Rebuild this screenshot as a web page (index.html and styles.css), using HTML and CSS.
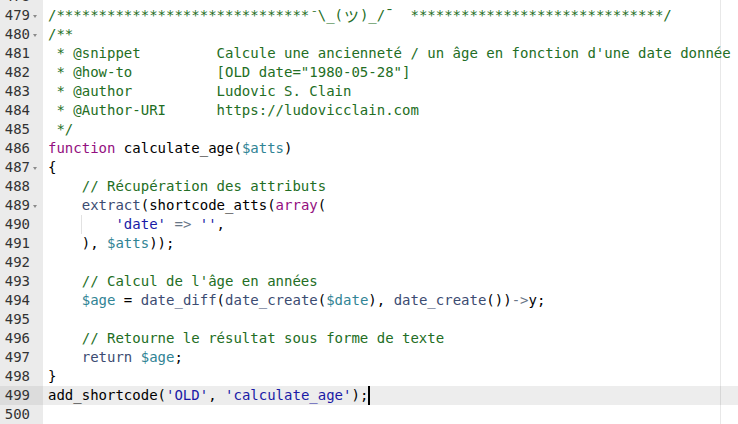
FILE: index.html
```html
<!DOCTYPE html>
<html lang="fr">
<head>
<meta charset="utf-8">
<title>Snippet</title>
<link rel="stylesheet" href="styles.css">
</head>
<body>
<div class="editor">
  <div class="gutter">
    <div class="lines">
      <div class="gl">478<span class="fw"></span></div>
      <div class="gl">479<span class="fw open"></span></div>
      <div class="gl">480<span class="fw open"></span></div>
      <div class="gl">481<span class="fw"></span></div>
      <div class="gl">482<span class="fw"></span></div>
      <div class="gl">483<span class="fw"></span></div>
      <div class="gl">484<span class="fw"></span></div>
      <div class="gl">485<span class="fw"></span></div>
      <div class="gl">486<span class="fw"></span></div>
      <div class="gl">487<span class="fw open"></span></div>
      <div class="gl">488<span class="fw"></span></div>
      <div class="gl">489<span class="fw open"></span></div>
      <div class="gl">490<span class="fw"></span></div>
      <div class="gl">491<span class="fw"></span></div>
      <div class="gl">492<span class="fw"></span></div>
      <div class="gl">493<span class="fw"></span></div>
      <div class="gl">494<span class="fw"></span></div>
      <div class="gl">495<span class="fw"></span></div>
      <div class="gl">496<span class="fw"></span></div>
      <div class="gl">497<span class="fw"></span></div>
      <div class="gl">498<span class="fw"></span></div>
      <div class="gl active">499<span class="fw"></span></div>
      <div class="gl">500<span class="fw"></span></div>
    </div>
  </div>
  <div class="content">
    <div class="print-margin"></div>
    <div class="lines">
<div class="cl"></div>
<div class="cl"><span class="cm">/******************************<span class="mac">¯</span>\_(<span class="wide">ツ</span>)_/¯  ******************************/</span></div>
<div class="cl"><span class="cm">/**</span></div>
<div class="cl"><span class="cm"> * @snippet         Calcule une ancienneté / un âge en fonction d'une date donnée</span></div>
<div class="cl"><span class="cm"> * @how-to          [OLD date="1980-05-28"]</span></div>
<div class="cl"><span class="cm"> * @author          Ludovic S. Clain</span></div>
<div class="cl"><span class="cm"> * @Author-URI      https://ludovicclain.com</span></div>
<div class="cl"><span class="cm"> */</span></div>
<div class="cl"><span class="kw">function</span> calculate_age(<span class="var">$atts</span>)</div>
<div class="cl">{</div>
<div class="cl">    <span class="cm">// Récupération des attributs</span></div>
<div class="cl">    <span class="fn">extract</span>(shortcode_atts(<span class="kw">array</span>(</div>
<div class="cl"><span class="guide">    </span>    <span class="str">'date'</span> <span class="op">=&gt;</span> <span class="str">''</span>,</div>
<div class="cl">    ), <span class="var">$atts</span>));</div>
<div class="cl"></div>
<div class="cl">    <span class="cm">// Calcul de l'âge en années</span></div>
<div class="cl">    <span class="var">$age</span> = <span class="fn">date_diff</span>(<span class="fn">date_create</span>(<span class="var">$date</span>), <span class="fn">date_create</span>())<span class="op">-&gt;</span>y;</div>
<div class="cl"></div>
<div class="cl">    <span class="cm">// Retourne le résultat sous forme de texte</span></div>
<div class="cl">    <span class="fn">return</span> <span class="var">$age</span>;</div>
<div class="cl">}</div>
<div class="cl active">add_shortcode(<span class="str">'OLD'</span>, <span class="str">'calculate_age'</span>);<span class="cursor"></span></div>
<div class="cl"></div>
    </div>
  </div>
</div>
</body>
</html>
```
FILE: styles.css
```css
html, body {
  margin: 0;
  padding: 0;
  background: #ffffff;
}

.editor {
  display: flex;
  width: 738px;
  height: 424px;
  overflow: hidden;
  font-family: "DejaVu Sans Mono", "Liberation Mono", "Noto Sans CJK JP", monospace;
  font-size: 14px;
  line-height: 19px;
  color: #000000;
}

.lines {
  margin-top: -13.5px;
}

.gutter {
  flex: 0 0 43px;
  background: #ebebeb;
  color: #333333;
}

.gl {
  height: 19px;
  display: flex;
  justify-content: flex-end;
  align-items: center;
  padding-right: 4px;
}

.gl.active {
  background: #dcdcdc;
}

.fw {
  width: 9px;
  height: 19px;
  display: flex;
  align-items: center;
  justify-content: center;
}

.fw.open::before {
  content: "";
  display: block;
  margin-top: 3px;
  margin-left: 1px;
  border-left: 2.5px solid transparent;
  border-right: 2.5px solid transparent;
  border-top: 3px solid #8a8a8a;
}

.content {
  flex: 1;
  position: relative;
  padding-left: 5px;
}

.print-margin {
  position: absolute;
  left: 677px;
  top: 0;
  bottom: 0;
  width: 1px;
  background: #e8e8e8;
}

.cl {
  position: relative;
  height: 19px;
  white-space: pre;
  margin-left: -5px;
  padding-left: 5px;
}

.cl.active {
  background: rgba(0, 0, 0, 0.07);
}

.cm { color: #236e24; }
.kw { color: #930f80; }
.var { color: #318495; }
.str { color: #1a1aa6; }
.op { color: #687687; }
.fn { color: #3c4c72; }

.mac {
  display: inline-block;
  width: 8.43px;
  text-align: right;
  font-size: 11px;
  vertical-align: top;
}

.wide {
  display: inline-block;
  width: 16.86px;
  text-align: center;
  font-family: "Noto Sans CJK JP", sans-serif;
  font-size: 15px;
  line-height: 19px;
  vertical-align: top;
}

.guide {
  display: inline-block;
  box-shadow: inset -1px 0 0 #e2e2e2;
  height: 19px;
  vertical-align: top;
}

.cursor {
  display: inline-block;
  width: 0;
  height: 19px;
  border-left: 2px solid #000000;
  vertical-align: top;
}
```
